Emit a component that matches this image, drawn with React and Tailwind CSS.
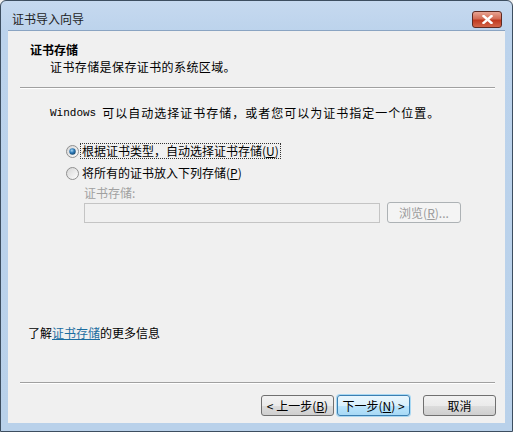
import React from "react";

const cjk = { fontFamily: '"Noto Sans CJK SC", "Noto Sans", sans-serif' };

function Radio({ checked }) {
  return (
    <svg width="13" height="13" viewBox="0 0 13 13" className="shrink-0">
      <defs>
        <linearGradient id={checked ? "rg1" : "rg2"} x1="0" y1="0" x2="1" y2="1">
          <stop offset="0" stopColor="#d4d4d4" />
          <stop offset="1" stopColor="#ffffff" />
        </linearGradient>
        <radialGradient id="dot" cx="0.4" cy="0.35" r="0.7">
          <stop offset="0" stopColor="#a9d8f5" />
          <stop offset="0.5" stopColor="#2b78b6" />
          <stop offset="1" stopColor="#17456a" />
        </radialGradient>
      </defs>
      <circle cx="6.5" cy="6.5" r="6" fill={`url(#${checked ? "rg1" : "rg2"})`} stroke="#8f8f8f" strokeWidth="1" />
      {checked && <circle cx="6.5" cy="6.5" r="3.2" fill="url(#dot)" />}
    </svg>
  );
}

function Btn({ children, primary, disabled, className = "" }) {
  const base = primary
    ? "border-[#3c7fb1] bg-[linear-gradient(#eaf6fd,#d9f0fc_50%,#bee6fd_50%,#a7d9f5)] shadow-[0_0_0_1px_#a8d8f3]"
    : disabled
    ? "border-[#adb2b5] bg-[#f4f4f4] text-[#9a9a9a]"
    : "border-[#707070] bg-[linear-gradient(#f2f2f2,#ebebeb_50%,#dddddd_50%,#cfcfcf)]";
  return (
    <div
      className={`h-[21px] flex items-center justify-center rounded-[3px] border text-[12px] leading-none ${base} ${className}`}
      style={cjk}
    >
      {children}
    </div>
  );
}

export default function App() {
  return (
    <div className="w-[513px] h-[432px] bg-[#f0f0f0]">
      <div className="w-[513px] h-[432px] flex flex-col border border-[#3d4e60] rounded-t-[6px] bg-[linear-gradient(#c6d9ef,#bcd3ec_30px,#b9d1ea)]">
        {/* title bar */}
        <div className="h-[29px] flex items-start justify-between pt-[9px] pl-[11px] pr-[10px] shrink-0">
          <span className="text-[12px] leading-[18px] text-[#1e1e1e]" style={cjk}>
            证书导入向导
          </span>
          <div className="w-[30px] h-[17px] mt-[1px] rounded-[3px] border border-[#5e2a22] bg-[linear-gradient(#e8a493,#d36c55_45%,#c0391f_55%,#d3664a)] flex items-center justify-center">
            <svg width="11" height="9" viewBox="0 0 11 9">
              <path d="M1.5 1 L9.5 8 M9.5 1 L1.5 8" stroke="#ffffff" strokeWidth="2.4" strokeLinecap="square" />
            </svg>
          </div>
        </div>
        {/* content */}
        <div className="flex-1 mx-[7px] mb-[8px] bg-[#f0f0f0] border-t border-[#8aa4c2] flex flex-col text-[12px] text-[#000]" style={cjk}>
          <div className="pt-[11px] pl-[22px] font-bold leading-[16px]">证书存储</div>
          <div className="mt-[1px] pl-[42px] leading-[16px] tracking-[0.4px]">证书存储是保存证书的系统区域。</div>
          <div className="mt-[12px] ml-[12px] mr-[10px] h-[2px] border-t border-[#a0a0a0] border-b border-b-white" />
          <div className="mt-[16px] pl-[42px] leading-[16px] flex items-center whitespace-nowrap">
            <span className="text-[11px] mr-[6px]" style={{ fontFamily: '"Liberation Mono", monospace' }}>
              Windows
            </span>
            <span className="tracking-[1px]">可以自动选择证书存储，或者您可以为证书指定一个位置。</span>
          </div>
          <div className="mt-[22px] pl-[58px] flex items-center h-[16px] gap-[1px]">
            <Radio checked />
            <span className="ml-[1px] px-[1px] leading-[14px] outline outline-1 outline-dotted outline-[#333] whitespace-nowrap">
              根据证书类型，自动选择证书存储(<span className="underline">U</span>)
            </span>
          </div>
          <div className="mt-[6px] pl-[58px] flex items-center h-[16px] gap-[1px]">
            <Radio />
            <span className="ml-[2px] leading-[14px] whitespace-nowrap">
              将所有的证书放入下列存储(<span className="underline">P</span>)
            </span>
          </div>
          <div className="mt-[4px] pl-[76px] leading-[16px] text-[#a0a0a0]">证书存储:</div>
          <div className="mt-[1px] pl-[76px] flex items-center gap-[7px]">
            <div className="w-[296px] h-[20px] border border-[#c4c4c4] bg-[#f0f0f0]" />
            <Btn disabled className="w-[74px] h-[20px]">
              浏览(<span className="underline">R</span>)...
            </Btn>
          </div>
          <div className="mt-[102px] pl-[20px] leading-[16px]">
            了解<span className="text-[#1c6da0] underline">证书存储</span>的更多信息
          </div>
          <div className="mt-[41px] ml-[12px] mr-[10px] h-[2px] border-t border-[#a0a0a0] border-b border-b-white" />
          <div className="mt-[11px] flex items-center pl-[253px]">
            <Btn className="w-[73px]">&lt; 上一步(<span className="underline">B</span>)</Btn>
            <Btn primary className="w-[73px] ml-[3px]">下一步(<span className="underline">N</span>) &gt;</Btn>
            <Btn className="w-[73px] ml-[13px]">取消</Btn>
          </div>
        </div>
      </div>
    </div>
  );
}
